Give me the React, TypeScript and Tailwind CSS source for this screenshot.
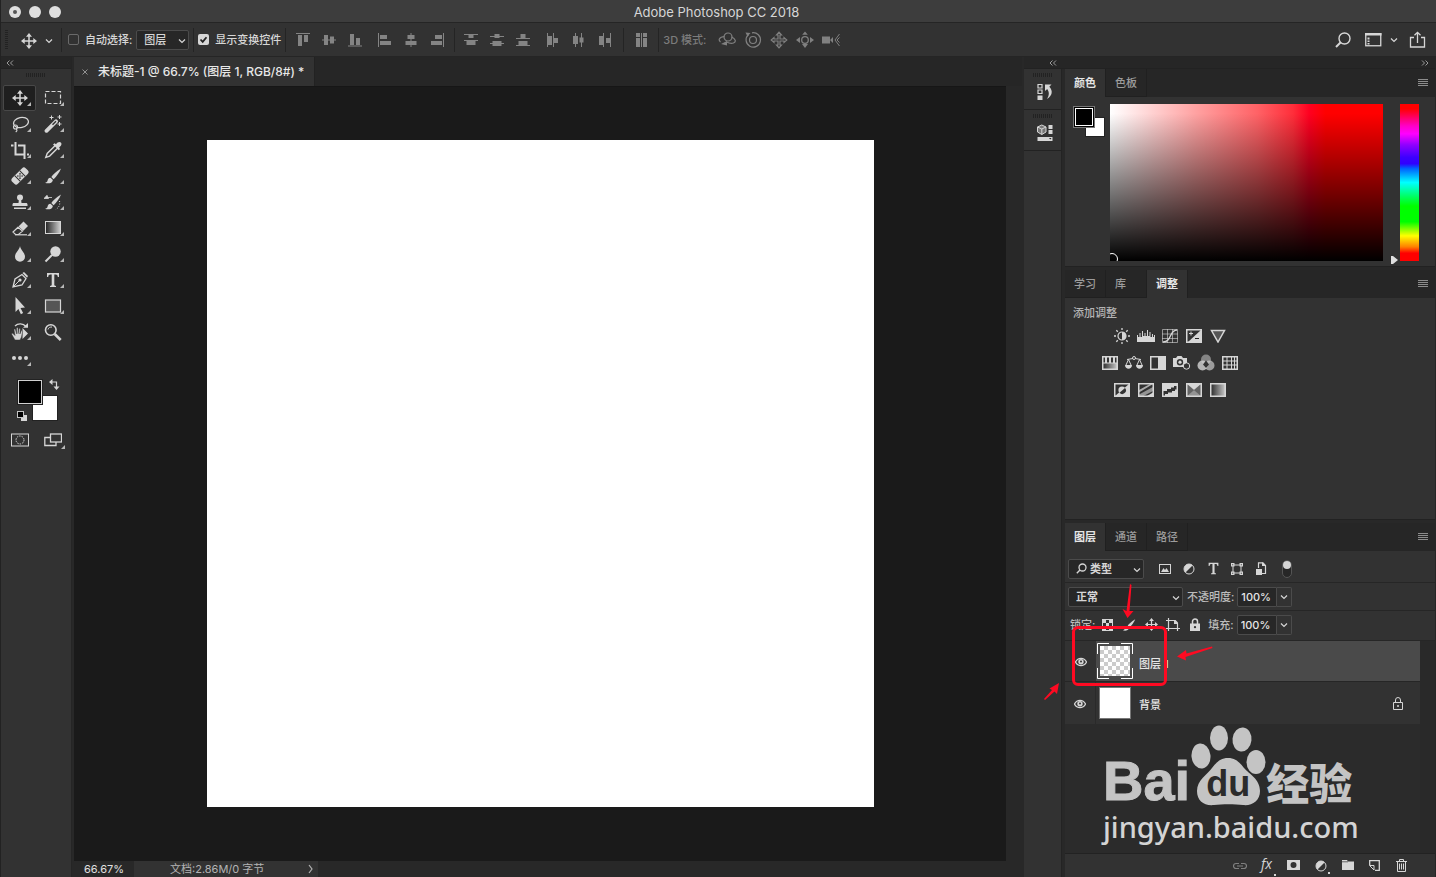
import React, { ReactNode } from "react";

type IconProps = { w?: number; h?: number; className?: string; children: ReactNode };

function Icon({ w = 18, h = 18, className = "", children }: IconProps) {
  return (
    <svg
      width={w}
      height={h}
      viewBox={`0 0 ${w} ${h}`}
      fill="currentColor"
      aria-hidden="true"
      className={`shrink-0 ${className}`}
    >
      {children}
    </svg>
  );
}

const line = { fill: "none", stroke: "currentColor" } as const;

const Chevron = ({ className = "" }: { className?: string }) => (
  <Icon w={8} h={6} className={className}>
    <path d="M1 1.500l3 3 3-3" {...line} strokeWidth="1.200" />
  </Icon>
);

const MoveIcon = ({ size = 16 }: { size?: number }) => (
  <svg width={size} height={size} viewBox="0 0 16 16" fill="currentColor" aria-hidden="true" className="shrink-0">
    <path d="M8 2v12M2 8h12" {...line} strokeWidth="1.500" />
    <path d="M8 0l3 3.700H5zM8 16l3-3.700H5zM0 8l3.700-3v6zM16 8l-3.700-3v6z" />
  </svg>
);

const DoubleChevron = ({ right = false }: { right?: boolean }) => (
  <Icon w={8} h={6}>
    {right ? (
      <path d="M1 .5L3.500 3 1 5.500M4.500 .5L7 3 4.500 5.500" {...line} strokeWidth="1" />
    ) : (
      <path d="M3.500 .5L1 3l2.500 2.500M7 .5L4.500 3 7 5.500" {...line} strokeWidth="1" />
    )}
  </Icon>
);

const GripH = () => (
  <svg width="20" height="4" aria-hidden="true">
    {Array.from({ length: 10 }, (_, i) => (
      <rect key={i} x={i * 2} y="0" width="1" height="4" fill="#222" />
    ))}
  </svg>
);

const MenuIcon = () => (
  <Icon w={10} h={8} className="text-[#8c8c8c]">
    <path d="M0 .5h10M0 2.500h10M0 4.500h10M0 6.500h10" {...line} />
  </Icon>
);

const BrushShape = () => (
  <>
    <path d="M17 1.500C12 4.500 9 7.500 7.300 10l2.300 2.200C12.500 9.500 15.500 5.500 17 1.500z" />
    <path d="M6.500 10.700c-2.200 0-2.700 1.500-3 3-.2 1-1 1.800-2.500 2 2.500 1.300 7.500.8 7.900-2.800z" />
  </>
);

const TShape = () => <path d="M3 2h12v4h-1.200c-.2-1.600-.8-2.400-2.300-2.400H10.300v10.200c0 .7.500 1 1.700 1.100V16H6v-1.100c1.200-.1 1.700-.4 1.700-1.100V3.600H6.500C5 3.600 4.400 4.400 4.200 6H3z" />;

const tools: { name: string; corner: boolean; icon: ReactNode }[] = [
  { name: "移动工具", corner: true, icon: <MoveIcon /> },
  {
    name: "矩形选框工具",
    corner: true,
    icon: <Icon><rect x="1.500" y="2.500" width="15" height="12" {...line} strokeWidth="1.200" strokeDasharray="4 2" /></Icon>,
  },
  {
    name: "套索工具",
    corner: true,
    icon: (
      <Icon>
        <ellipse cx="10" cy="7.500" rx="7.500" ry="5" transform="rotate(-12 10 7.500)" {...line} strokeWidth="1.300" />
        <circle cx="4.500" cy="12" r="2" {...line} strokeWidth="1.100" />
        <path d="M5 14c1.500.8 1.200 2-.3 3" {...line} strokeWidth="1.100" />
      </Icon>
    ),
  },
  {
    name: "魔棒工具",
    corner: true,
    icon: (
      <Icon>
        <path d="M2.500 15.800L12 6.300" {...line} strokeWidth="3.800" strokeLinecap="round" />
        <path d="M8.500 9.800L12 6.300" fill="none" stroke="#323232" strokeWidth="1.400" />
        <path d="M7.500 .5v4M5.500 2.500h4M15.500 7v4M13.500 9h4M15.500 0v4M13.500 2h4" {...line} />
      </Icon>
    ),
  },
  {
    name: "裁剪工具",
    corner: true,
    icon: <Icon><path d="M0 4.500h2.500M4.500 1v12.500H14M7 4.500h6.500V18M16 13.500h2" {...line} strokeWidth="2" /></Icon>,
  },
  {
    name: "吸管工具",
    corner: true,
    icon: (
      <Icon>
        <path d="M11.500 4.200L3.200 12.500l-1.400 3.900 3.800-1.300 8.400-8.400" {...line} strokeWidth="1.400" />
        <path d="M9 3.500l1.500-1.200 1.500 1C13.500 1 15.500.3 16.900 1.500c1.200 1.400.5 3.400-1.800 4.900l.9 1.500-1.200 1.400z" />
      </Icon>
    ),
  },
  {
    name: "污点修复画笔工具",
    corner: true,
    icon: (
      <Icon>
        <g transform="rotate(-45 9 9)">
          <rect x="-.5" y="5" width="19" height="8" rx="2.500" />
          <path d="M5.500 5v8M12.500 5v8" stroke="#323232" fill="none" />
          <g fill="#323232">
            <circle cx="7.500" cy="7.500" r=".8" /><circle cx="10.500" cy="7.500" r=".8" />
            <circle cx="7.500" cy="10.500" r=".8" /><circle cx="10.500" cy="10.500" r=".8" />
            <circle cx="9" cy="9" r=".8" />
          </g>
        </g>
      </Icon>
    ),
  },
  { name: "画笔工具", corner: true, icon: <Icon><BrushShape /></Icon> },
  {
    name: "仿制图章工具",
    corner: true,
    icon: (
      <Icon>
        <circle cx="9" cy="4.500" r="3" />
        <path d="M8 6h2l.5 4H15c1 0 1.500.6 1.500 1.500V13h-15v-1.500C1.500 10.600 2 10 3 10h4.500zM3 14.500h12V16H3z" />
      </Icon>
    ),
  },
  {
    name: "历史记录画笔工具",
    corner: true,
    icon: (
      <Icon>
        <BrushShape />
        <path d="M2 4.500h6M0 5.500l3-3.200 1.500 3.200z" stroke="currentColor" strokeWidth=".8" />
        <path d="M15.500 8c1 4-1 7-4 8.500" {...line} strokeDasharray="1 1.500" />
      </Icon>
    ),
  },
  {
    name: "橡皮擦工具",
    corner: true,
    icon: (
      <Icon>
        <path d="M7.500 7.500L12.500 2.500l4.500 4.500-4.700 4.700z" />
        <path d="M7 8.300L2 13l2.500 2.500h3l4-3.400z" {...line} strokeWidth="1.200" />
        <path d="M4 15.800h12" {...line} strokeWidth="1.200" />
      </Icon>
    ),
  },
  {
    name: "渐变工具",
    corner: true,
    icon: (
      <Icon>
        <defs><linearGradient id="g-tool"><stop stopColor="#222" /><stop offset="1" stopColor="#d0d0d0" /></linearGradient></defs>
        <rect x="1.500" y="2.500" width="15" height="12" fill="url(#g-tool)" stroke="currentColor" />
      </Icon>
    ),
  },
  {
    name: "模糊工具",
    corner: true,
    icon: <Icon><path d="M9 1c.4 4 5 6.500 5 10.700a5 5 0 0 1-10 0C4 7.500 8.600 5 9 1z" /></Icon>,
  },
  {
    name: "减淡工具",
    corner: true,
    icon: <Icon><circle cx="11.500" cy="6.500" r="5.200" /><path d="M8 10l-6.500 6.500" {...line} strokeWidth="2" /></Icon>,
  },
  {
    name: "钢笔工具",
    corner: true,
    icon: (
      <Icon>
        <path d="M2 16l2-8 7-4.500 4 4-4 6.500z" {...line} strokeWidth="1.300" />
        <path d="M2 16l6-6" {...line} />
        <circle cx="9" cy="9" r="1.600" />
        <path d="M11.500 2L13 1l4 4-1 1.700z" />
      </Icon>
    ),
  },
  { name: "横排文字工具", corner: true, icon: <Icon><TShape /></Icon> },
  {
    name: "路径选择工具",
    corner: true,
    icon: <Icon><path d="M4.500 0l9.500 10.500-4.500.5 2.600 5-2.200 1.200-2.500-5.100L4.500 15z" /></Icon>,
  },
  {
    name: "矩形工具",
    corner: true,
    icon: <Icon><rect x="1.500" y="3" width="15" height="12" fill="#555" stroke="currentColor" strokeWidth="1.200" /></Icon>,
  },
  {
    name: "旋转视图工具",
    corner: true,
    icon: (
      <Icon>
        <path d="M4 3C7 0 12 .2 15 3.500" {...line} strokeWidth="1.300" />
        <path d="M12 4.800h5V0zM11.500 5l5.500 5.500-5.500 5.500z" />
        <path
          d="M4 17L.8 11.500c-.5-1 .8-1.700 1.400-.8L4 12.500 3 6.800c-.1-1 1.200-1.200 1.500-.2l1 4.200V5.300c0-1 1.500-1 1.500 0v5.400l.9-4.800c.2-1 1.500-.8 1.400.2l-.4 4.900 1.300-2.900c.4-.9 1.600-.5 1.400.4L10.500 14 9 17z"
          stroke="#323232"
          strokeWidth=".5"
        />
      </Icon>
    ),
  },
  {
    name: "缩放工具",
    corner: false,
    icon: (
      <Icon>
        <circle cx="6.800" cy="7" r="5.300" {...line} strokeWidth="1.600" />
        <path d="M4 6.500C4.500 4.500 6 4 8 4" {...line} />
        <path d="M10.700 11l6 6" {...line} strokeWidth="2.600" />
      </Icon>
    ),
  },
  {
    name: "编辑工具栏",
    corner: true,
    icon: <Icon><circle cx="3" cy="9" r="2" /><circle cx="9" cy="9" r="2" /><circle cx="15" cy="9" r="2" /></Icon>,
  },
];

const Corner = () => (
  <svg width="4" height="4" className="absolute right-1 bottom-1 fill-[#b8b8b8]" aria-hidden="true">
    <path d="M4 0v4H0z" />
  </svg>
);

/* Alignment and distribution glyphs, on a 14 x 14 grid. */
const alignGroups: { name: string; d: string }[][] = [
  [
    { name: "顶对齐", d: "M0 0h14v1H0zM2 2h4v11H2zM8 2h4v7H8z" },
    { name: "垂直居中对齐", d: "M0 6.500h14v1H0zM2 2h4v10H2zM8 3.500h4v7H8z" },
    { name: "底对齐", d: "M0 12.500h14v1H0zM2 1h4v11H2zM8 5h4v7H8z" },
  ],
  [
    { name: "左对齐", d: "M0 0h1v14H0zM2 2h7v4H2zM2 8h11v4H2z" },
    { name: "水平居中对齐", d: "M6.500 0h1v14h-1zM3.500 2h7v4h-7zM1.500 8h11v4h-11z" },
    { name: "右对齐", d: "M13 0h1v14h-1zM5 2h7v4H5zM1 8h11v4H1z" },
  ],
  [
    { name: "按顶分布", d: "M0 1h14v1H0zM4.500 2h5v3h-5zM0 7h14v1H0zM2.500 8h9v4h-9z" },
    { name: "垂直居中分布", d: "M0 3h14v1H0zM4.500 1h5v4h-5zM0 10h14v1H0zM2.500 8h9v5h-9z" },
    { name: "按底分布", d: "M0 5h14v1H0zM4.500 1h5v4h-5zM0 12h14v1H0zM2.500 8h9v4h-9z" },
  ],
  [
    { name: "按左分布", d: "M1 0h1v14H1zM2 3h4v9H2zM7 0h1v14H7zM8 5h4v5H8z" },
    { name: "水平居中分布", d: "M3 0h1v14H3zM1 3h5v8H1zM9 0h1v14H9zM7.500 4.500h4v5h-4z" },
    { name: "按右分布", d: "M5 0h1v14H5zM1 3h4v9H1zM12 0h1v14h-1zM8 5h4v5H8z" },
  ],
];

const Sep = () => <div className="h-6 w-px shrink-0 bg-[#242424]" />;

const AlignGroup = ({ items }: { items: { name: string; d: string }[] }) => (
  <div className="flex gap-3">
    {items.map((a) => (
      <button key={a.name} type="button" aria-label={a.name} className="text-[#848484]">
        <Icon w={14} h={14}><path d={a.d} /></Icon>
      </button>
    ))}
  </div>
);

const threeD: { name: string; icon: ReactNode }[] = [
  {
    name: "环绕移动 3D 相机",
    icon: (
      <>
        <circle cx="10" cy="6" r="4" {...line} strokeWidth="1.200" />
        <path d="M6.500 5.500C1 6 0 9 2.500 11M13.500 6c4 1.500 5 5 2 6-2 .8-5 0-7-1" {...line} strokeWidth="1.200" />
        <path d="M3 13l6 1.500V10z" />
      </>
    ),
  },
  {
    name: "滚动 3D 相机",
    icon: (
      <>
        <circle cx="9" cy="9" r="3.500" {...line} strokeWidth="1.200" />
        <path d="M4.500 3.500A7.200 7.200 0 1 0 8 1.800" {...line} strokeWidth="1.200" />
        <path d="M1.500 1.500l5 .5-3 3.500z" />
      </>
    ),
  },
  {
    name: "平移 3D 相机",
    icon: <path d="M9 1.200L11.500 4H10v4h4V6.500L16.800 9 14 11.500V10h-4v4h1.500L9 16.800 6.500 14H8v-4H4v1.500L1.200 9 4 6.500V8h4V4H6.500z" {...line} strokeWidth="1.200" />,
  },
  {
    name: "滑动 3D 相机",
    icon: (
      <>
        <circle cx="9" cy="9" r="3.300" {...line} strokeWidth="1.300" />
        <path d="M9 .5l2.800 3.300H6.200zM9 17l3-4H6zM0 9l4-3v6zM18 9l-4-3v6z" />
      </>
    ),
  },
  {
    name: "变焦 3D 相机",
    icon: (
      <>
        <path d="M0 5.500h8v7H0zM8 9l3-3v6z" />
        <path d="M17.500 3L13 9l4.500 6M15 9l2.500-2.500M15 9l2.500 2.500" {...line} />
      </>
    ),
  },
];

function OptionsBar() {
  return (
    <div className="flex h-[34px] shrink-0 items-center border-b border-[#252525] bg-[#323232] pr-[10px]">
      <svg width="3" height="20" className="ml-1 shrink-0" aria-hidden="true">
        {Array.from({ length: 10 }, (_, i) => <rect key={i} y={i * 2} width="3" height="1" fill="#222" />)}
      </svg>
      <button type="button" aria-label="移动工具预设" className="ml-[13px] flex items-center gap-2 pt-0.5">
        <MoveIcon />
        <Chevron />
      </button>
      <div className="ml-2"><Sep /></div>
      <label className="ml-[6px] flex items-center gap-[6px] font-medium whitespace-nowrap">
        <input type="checkbox" className="size-[11px] appearance-none rounded-xs border border-[#6a6a6a]" />
        自动选择:
      </label>
      <div className="relative ml-1">
        <select aria-label="自动选择" className="h-5 w-[53px] appearance-none rounded-xs border border-[#4b4b4b] bg-[#272727] pl-[7px] text-[11px] leading-4 font-medium">
          <option>图层</option>
          <option>组</option>
        </select>
        <Chevron className="pointer-events-none absolute top-2 right-[3px]" />
      </div>
      <div className="ml-1"><Sep /></div>
      <label className="ml-1 flex items-center gap-[6px] font-medium whitespace-nowrap">
        <span className="relative flex">
          <input type="checkbox" defaultChecked className="size-[11px] appearance-none rounded-xs bg-[#d6d6d6]" />
          <svg width="11" height="11" className="pointer-events-none absolute inset-0" aria-hidden="true">
            <path d="M2.500 5.500l2.200 2.300 3.800-4.600" fill="none" stroke="#222" strokeWidth="1.800" />
          </svg>
        </span>
        显示变换控件
      </label>
      <div className="ml-1"><Sep /></div>
      <div className="ml-[10px] flex items-center gap-4">
        <AlignGroup items={alignGroups[0]} />
        <AlignGroup items={alignGroups[1]} />
      </div>
      <div className="ml-[10px]"><Sep /></div>
      <div className="ml-[9px] flex items-center gap-4">
        <AlignGroup items={alignGroups[2]} />
        <AlignGroup items={alignGroups[3]} />
      </div>
      <div className="ml-[11px]"><Sep /></div>
      <button type="button" aria-label="自动对齐图层" className="ml-[11px] text-[#848484]">
        <Icon w={13} h={14}><path d="M1 0h4v4H1zM1 5h4v9H1zM6 0h1v14H6zM8 0h4v4H8zM8 5h4v9H8z" /></Icon>
      </button>
      <div className="ml-[10px]"><Sep /></div>
      <span className="ml-1 font-medium whitespace-nowrap text-[#7c7c7c]">3D 模式:</span>
      <div className="ml-3 flex gap-2">
        {threeD.map((t) => (
          <button key={t.name} type="button" aria-label={t.name} className="text-[#808080]"><Icon>{t.icon}</Icon></button>
        ))}
      </div>
      <div className="ml-auto flex items-center">
        <button type="button" aria-label="搜索">
          <Icon><circle cx="10.500" cy="7.500" r="5.500" {...line} strokeWidth="1.400" /><path d="M6.500 11.500l-4.500 4.500" {...line} strokeWidth="2" /></Icon>
        </button>
        <button type="button" aria-label="选择工作区" className="ml-[13px] flex items-center gap-2">
          <Icon w={17} h={14}>
            <rect x=".75" y=".75" width="15" height="12" {...line} strokeWidth="1.300" />
            <path d="M0 0h16.500v2.500H0zM2.500 4.500h2v2h-2zM2.500 7.500h2v1.500h-2zM2.500 10h2v1.500h-2z" />
          </Icon>
          <Chevron />
        </button>
        <button type="button" aria-label="共享图像" className="ml-[11px]">
          <Icon w={17} h={18}>
            <path d="M5 6.500H1.500V16h14V6.500H12M8.500 12V1.500M5.500 4.300l3-3 3 3" {...line} strokeWidth="1.300" />
          </Icon>
        </button>
      </div>
    </div>
  );
}

function Toolbar() {
  return (
    <aside className="mr-0.5 flex w-[71px] shrink-0 flex-col border-r border-[#252525] bg-[#323232]">
      <div className="flex h-3 shrink-0 items-center border-b border-[#222] bg-[#262626] pl-[5px] text-[#9a9a9a]"><DoubleChevron /></div>
      <div className="flex justify-center pt-1 pb-2"><GripH /></div>
      <div className="grid grid-cols-[33px_33px] pl-0.5">
        {tools.map((t, i) => (
          <button
            key={t.name}
            type="button"
            aria-label={t.name}
            className={`relative flex h-[26px] items-center justify-center rounded-xs border ${i === 0 ? "border-[#484848] bg-[#1f1f1f]" : "border-transparent"}`}
          >
            {t.icon}
            {t.corner && <Corner />}
          </button>
        ))}
      </div>
      <div className="mt-2 ml-4 grid h-[44px] w-[44px] grid-cols-[26px_18px] grid-rows-[26px_18px]">
        <div className="relative">
          <button type="button" aria-label="背景色" className="absolute top-4 left-[15px] size-[26px] border border-[#222] bg-white" />
          <button type="button" aria-label="前景色" className="absolute inset-0 border border-[#222] bg-black ring-1 ring-[#d0d0d0] ring-inset" />
        </div>
        <button type="button" aria-label="切换前景色和背景色" className="flex items-start pl-1.5">
          <Icon w={11} h={12}><path d="M3 3h4.500v5" {...line} strokeWidth="1.200" /><path d="M0 3l3.500-3v6zM7.500 11l-3-3.500h6z" /></Icon>
        </button>
        <button type="button" aria-label="默认前景色和背景色" className="flex items-start pt-1.5">
          <Icon w={10} h={11}><rect x="4" y="4" width="6" height="6" /><rect x=".5" y=".5" width="6" height="6" fill="#000" stroke="#c4c4c4" /></Icon>
        </button>
      </div>
      <div className="mt-1 grid grid-cols-[33px_33px] pl-0.5">
        <button type="button" aria-label="以快速蒙版模式编辑" className="flex h-[26px] items-center justify-center">
          <Icon><rect x=".5" y="3" width="17" height="12" {...line} /><circle cx="9" cy="9" r="4" {...line} strokeDasharray="1.500 1" /></Icon>
        </button>
        <button type="button" aria-label="更改屏幕模式" className="relative flex h-[26px] items-center justify-center">
          <Icon><rect x="6.500" y="3" width="11" height="8" {...line} strokeWidth="1.300" /><path d="M6 6.500H.8v8H12V11" {...line} strokeWidth="1.300" /></Icon>
          <Corner />
        </button>
      </div>
    </aside>
  );
}

function DocumentArea() {
  return (
    <main className="flex min-w-0 flex-1 flex-col">
      <div className="flex h-[29px] shrink-0 bg-[#262626]">
        <div className="flex items-center gap-[10px] border-r border-[#222] bg-[#323232] pr-[10px] pl-2 text-[#e8e8e8]">
          <button type="button" aria-label="关闭文档" className="text-[#929292]">
            <Icon w={6} h={6}><path d="M.5 .5l5 5M5.500 .5l-5 5" {...line} /></Icon>
          </button>
          <span className="text-[12px] font-medium whitespace-nowrap">未标题-1 @ 66.7% (图层 1, RGB/8#) *</span>
        </div>
      </div>
      <div className="flex min-h-[700px] flex-1">
        <div className="flex flex-1 items-center justify-center border-t border-[#161616] bg-[#1a1a1a] pb-0.5">
          <div className="size-[667px] bg-white" />
        </div>
        <div className="w-4 shrink-0 bg-[#282828]" />
      </div>
      <div className="flex h-4 shrink-0 items-center bg-[#282828] text-[#e0e0e0]">
        <span className="w-[60px] pl-[10px]">66.67%</span>
        <div className="flex h-full w-[184px] items-center justify-between bg-[#323232] pr-1 pl-9 text-[#b4b4b4]">
          <span className="whitespace-nowrap">文档:2.86M/0 字节</span>
          <button type="button" aria-label="状态栏选项"><Icon w={6} h={10}><path d="M1 1l3 4-3 4" {...line} strokeWidth="1.200" /></Icon></button>
        </div>
      </div>
    </main>
  );
}

function IconDock() {
  return (
    <div className="mr-[3px] flex w-[38px] shrink-0 flex-col border-r border-[#232323] bg-[#323232]">
      <div className="flex h-[41px] flex-col items-center border-b border-[#222] pt-1">
        <GripH />
        <button type="button" aria-label="历史记录" className="mt-1.5 ml-1">
          <Icon><path d="M2 1.500h4v3.500H2zM2 7h4v3.500H2z" {...line} strokeWidth="1.200" /><path d="M1.500 12.500h5v4.500h-5z" /><path d="M9 1.500h6.500l-2.200 2.200c4 4 3 9-2.300 12.300 2.500-4 2.300-7 .2-10L9 8z" /></Icon>
        </button>
      </div>
      <div className="flex h-[41px] flex-col items-center border-b border-[#222] pt-1">
        <GripH />
        <button type="button" aria-label="属性" className="mt-1.5 ml-1">
          <Icon w={16} h={18}>
            <path d="M4.800 1l4.200 2v5L4.800 10.500.5 8V3z" fill="#777" stroke="currentColor" /><path d="M.5 3l4.300 2L9 3M4.800 5v5.500" {...line} />
            <path d="M11.500 1h4v4h-4zM11.500 6h4v4h-4zM.5 13h15v4H.5z" /><path d="M12 14h2.500l-1.200 1.500z" fill="#222" />
          </Icon>
        </button>
      </div>
    </div>
  );
}

function Tabs({ items, active }: { items: string[]; active: string }) {
  return (
    <div className="flex h-7 shrink-0 items-stretch bg-[#262626] pr-[7px]">
      <div role="tablist" className="flex">
        {items.map((t) => (
          <button
            key={t}
            type="button"
            role="tab"
            aria-selected={t === active}
            className={`w-[41px] border-r border-[#202020] pl-[9px] text-left ${t === active ? "bg-[#323232] font-bold text-[#e6e6e6]" : "border-b font-medium text-[#9c9c9c]"}`}
          >
            {t}
          </button>
        ))}
      </div>
      <button type="button" aria-label="面板菜单" className="ml-auto"><MenuIcon /></button>
    </div>
  );
}

function ColorPanel() {
  return (
    <section className="mb-[3px] shrink-0 border-b border-[#222] bg-[#323232]">
      <Tabs items={["颜色", "色板"]} active="颜色" />
      <div className="flex pt-[7px] pb-[5px] pl-2">
        <div className="relative mt-0.5 h-8 w-8 shrink-0">
          <button type="button" aria-label="背景色" className="absolute right-0 bottom-px size-5 border border-[#222] bg-white" />
          <button type="button" aria-label="前景色" className="absolute top-0 left-0 size-[22px] border border-[#777] bg-black p-px">
            <span className="block size-full border border-white bg-black" />
          </button>
        </div>
        <div className="relative ml-[5px] h-[157px] flex-1 overflow-hidden bg-[linear-gradient(to_top,#000,transparent_94%),linear-gradient(to_right,#fff,#ffa0a0_32%,#ff6266_54%,#ff2e3a_67%,#ff0020_73%,#f00_79%)]">
          <span className="absolute -bottom-1 -left-1 size-3 rounded-full border border-white" />
        </div>
        <div className="relative mr-4 ml-[17px] h-[157px] w-[19px] bg-[linear-gradient(#f00_3%,#ff00c8_14%,#f0f_19%,#9000ff_26%,#3c00ff_34%,#3000ff_38%,#0060ff_41%,#0ff_50%,#00ff60_59%,#0f0_65%,#0f0_75%,#ff0_84%,#ff8000_91%,#f00_95%)]">
          <svg width="8" height="8" className="absolute -bottom-[3px] -left-[10px]" aria-hidden="true"><path d="M1 0h2l5 4-5 4H1z" fill="#e0e0e0" /></svg>
        </div>
      </div>
    </section>
  );
}

const Frame = ({ children }: { children?: ReactNode }) => (
  <Icon w={16} h={14}>{children}<rect x=".75" y=".75" width="14.500" height="12.500" {...line} strokeWidth="1.500" /></Icon>
);

const adjustRows: { name: string; icon: ReactNode }[][] = [
  [
    { name: "亮度/对比度", icon: <Icon w={16} h={16}><circle cx="8" cy="8" r="4" {...line} strokeWidth="1.200" /><path d="M8 4a4 4 0 0 1 0 8z" /><path d="M8 0v2M8 14v2M0 8h2M14 8h2M2.300 2.300l1.500 1.500M12.200 12.200l1.500 1.500M2.300 13.700l1.500-1.500M12.200 3.800l1.500-1.500" {...line} strokeWidth="1.300" /></Icon> },
    { name: "色阶", icon: <Icon w={18} h={14}><path d="M0 13V6h1v2h1.500V4h1v4H5V2h1v5h1.500V4h1v3H10V1h1v6h1.500V3h1v5H15V5h1v3h1V6h1v7z" /></Icon> },
    { name: "曲线", icon: <Icon w={16} h={14}><path d="M.5 .5h15v13H.5zM5.500 0v14M10.500 0v14M0 5h16M0 9.500h16" {...line} opacity=".6" /><path d="M1 13c9 0 6-12 14-12" {...line} strokeWidth="1.300" /></Icon> },
    { name: "曝光度", icon: <Frame><path d="M15 1v12H2z" /><path d="M3 4.500h4M5 2.500v4" {...line} /><path d="M9 9.500h4" stroke="#222" /></Frame> },
    { name: "自然饱和度", icon: <Icon w={16} h={14}><path d="M1.500 1.500h13L8 13z" fill="#555" stroke="currentColor" strokeWidth="1.500" /></Icon> },
  ],
  [
    { name: "色相/饱和度", icon: <Frame><path d="M0 7h16v7H0z" fill="url(#g-adj)" /><path d="M4 1v6M8 1v6M12 1v6" {...line} strokeWidth="2" /><path d="M1 7h14" {...line} /></Frame> },
    { name: "色彩平衡", icon: <Icon w={18} h={14}><circle cx="9" cy="2" r="1.500" {...line} /><path d="M2 3.500l6-1M10 2.500l6 1M3.500 3.500L1 9M3.500 3.500L6 9M14.500 3.500L12 9M14.500 3.500L17 9" {...line} /><path d="M0 9h7c0 5-7 5-7 0zM11 9h7c0 5-7 5-7 0z" /></Icon> },
    { name: "黑白", icon: <Frame><path d="M8 1h7v12H8z" /></Frame> },
    { name: "照片滤镜", icon: <Icon w={18} h={15}><path fillRule="evenodd" d="M0 3h3l1.500-2h4L10 3h4v5a4 4 0 0 0-4 4H0zM7 4a3.200 3.200 0 1 0 0 6.400A3.200 3.200 0 0 0 7 4z" /><circle cx="7" cy="7.200" r="1.600" /><circle cx="13.500" cy="11" r="3.200" {...line} /></Icon> },
    { name: "通道混合器", icon: <Icon w={18} h={17}><circle cx="9" cy="5.500" r="5" opacity=".5" /><circle cx="5.500" cy="11.500" r="5" opacity=".8" /><circle cx="12.500" cy="11.500" r="5" opacity=".65" /><path d="M9 6.500l3 4-3 3.500-3-3.500z" fill="#333" /></Icon> },
    { name: "颜色查找", icon: <Frame><path d="M1 5h14M1 9h14M5 1v12M9.500 1v12M12.500 1v12" {...line} /></Frame> },
  ],
  [
    { name: "反相", icon: <Frame><path d="M1 13L15 1v12z" /><circle cx="8" cy="7" r="3.600" /><path d="M5.500 9.700A3.600 3.600 0 0 0 11 5z" fill="#333" /></Frame> },
    { name: "色调分离", icon: <Frame><path d="M1 7L12 1h3L1 9.500z" opacity=".75" /><path d="M1 13v-1.500L15 4v4L5.500 13z" opacity=".6" /><path d="M9 13l6-3.500V13z" /></Frame> },
    { name: "阈值", icon: <Frame><path d="M1 1h14v2h-3v1.500H9V6H5v2H1z" /><path d="M3 13v-2h3V9.500h4V8h3V6.500h2V13z" /></Frame> },
    { name: "可选颜色", icon: <Frame><path d="M1 1h14L8 7z" /><path d="M1 13h14L8 7z" opacity=".6" /><path d="M1 1l7 6-7 6zM15 1L8 7l7 6z" opacity=".3" /></Frame> },
    { name: "渐变映射", icon: <Frame><path d="M0 0h16v14H0z" fill="url(#g-adj)" /></Frame> },
  ],
];

function AdjustPanel() {
  return (
    <section className="mb-[3px] flex h-[250px] shrink-0 flex-col border-b border-[#222] bg-[#323232]">
      <svg width="0" height="0" className="absolute" aria-hidden="true">
        <defs><linearGradient id="g-adj"><stop stopColor="#222" /><stop offset="1" stopColor="#d0d0d0" /></linearGradient></defs>
      </svg>
      <Tabs items={["学习", "库", "调整"]} active="调整" />
      <h2 className="px-2 pt-[7px] leading-4 font-medium text-[#b4b4b4]">添加调整</h2>
      <div className="flex w-[210px] flex-col items-center pt-px">
        {adjustRows.map((row, i) => (
          <div key={i} className="flex h-[27px] items-center">
            {row.map((a) => (
              <button key={a.name} type="button" aria-label={a.name} className="flex w-6 justify-center">{a.icon}</button>
            ))}
          </div>
        ))}
      </div>
    </section>
  );
}

const filterIcons: { name: string; icon: ReactNode }[] = [
  { name: "像素图层滤镜", icon: <Icon w={12} h={12}><rect x=".5" y="1.500" width="11" height="9" {...line} /><path d="M2 9l2.500-4L6 7l1.500-2L10 9z" /></Icon> },
  { name: "调整图层滤镜", icon: <Icon w={12} h={12}><circle cx="6" cy="6" r="5" {...line} /><path d="M2.500 2.500A5 5 0 0 1 9.500 2.500l-7 7A5 5 0 0 1 2.500 2.500z" /></Icon> },
  { name: "文字图层滤镜", icon: <svg width="13" height="13" viewBox="2 1 14 16" fill="currentColor"><TShape /></svg> },
  { name: "形状图层滤镜", icon: <Icon w={12} h={12}><path d="M2 2h8v8H2z" {...line} /><path d="M0 0h3.500v3.500H0zM8.500 0H12v3.500H8.500zM0 8.500h3.500V12H0zM8.500 8.500H12V12H8.500z" /><path d="M1.200 1.200h1v1h-1zM9.800 1.200h1v1h-1zM1.200 9.800h1v1h-1zM9.800 9.800h1v1h-1z" fill="#333" /></Icon> },
  { name: "智能对象滤镜", icon: <Icon w={12} h={13}><path d="M3.500 6V.8H8L10.500 3.500v8H7" {...line} strokeWidth="1.200" /><path d="M1 7h6v6H1zM7 0v4h4z" /></Icon> },
];

const PercentBox = ({ label }: { label: string }) => (
  <div className="flex items-center">
    <label className="flex items-center gap-[3px] font-medium whitespace-nowrap text-[#bcbcbc]">
      {label}
      <input type="text" defaultValue="100%" className="h-5 w-10 rounded-l-xs border border-[#4b4b4b] bg-[#272727] px-[3px] text-[11px] text-[#e6e6e6]" />
    </label>
    <button type="button" aria-label={`${label}滑块`} className="flex h-5 w-[15px] items-center justify-center rounded-r-xs border border-l-0 border-[#4b4b4b]"><Chevron /></button>
  </div>
);

const EyeIcon = () => (
  <Icon w={12} h={10}>
    <path d="M.5 5C3 .2 9 .2 11.500 5 9 9.800 3 9.800 .5 5z" {...line} strokeWidth="1.300" />
    <circle cx="6" cy="4.700" r="2.700" /><circle cx="6" cy="4.500" r="1" fill="#333" />
  </Icon>
);

const LockIcon = () => (
  <Icon w={10} h={13}><path d="M2.500 6V3.500a2.500 2.500 0 0 1 5 0V6" {...line} strokeWidth="1.500" /><path fillRule="evenodd" d="M0 5.500h10V13H0zM5 8a1 1 0 0 0 0 2.300A1 1 0 0 0 5 8z" /></Icon>
);

function Watermark() {
  return (
    <div className="flex flex-col pt-px pl-[38px] text-[#c4c4c4]">
      <div className="flex h-[82px] items-end">
        <span className="h-[58px] text-[56px] leading-[64px] font-bold [font-family:'Liberation_Sans',sans-serif] [-webkit-text-stroke:1px_#c4c4c4]">Bai</span>
        <div className="relative h-[82px] w-[76px] shrink-0">
          <svg width="76" height="82" viewBox="0 0 76 82" fill="currentColor" aria-hidden="true">
            <ellipse cx="11" cy="31" rx="9.500" ry="12.500" transform="rotate(-6 11 31)" />
            <ellipse cx="29" cy="13" rx="9" ry="12.500" />
            <ellipse cx="52" cy="14.500" rx="9.500" ry="12" transform="rotate(6 52 14.500)" />
            <ellipse cx="66" cy="37" rx="9.500" ry="12" />
            <path d="M38 33c8 0 12 5 16 10 5 6 16 11 16 23 0 10-8 15-17 14-8-1-21-1-29 0C14 81 7 76 7 66c0-11 10-16 15-23 4-5 8-10 16-10z" />
          </svg>
          <span className="absolute inset-x-0 bottom-[5px] text-center text-[36px] leading-9 font-bold text-[#2b2b2b] [font-family:'Liberation_Sans',sans-serif]">du</span>
        </div>
        <span className="mb-1 text-[43px] leading-[44px] font-black whitespace-nowrap [font-family:'Noto_Sans_CJK_SC',sans-serif]">经验</span>
      </div>
      <span className="text-[29px] leading-10 font-medium whitespace-nowrap text-[#d4d4d4] [font-family:'Noto_Sans',sans-serif]">jingyan.baidu.com</span>
    </div>
  );
}

function LayersPanel() {
  return (
    <section className="relative flex flex-1 flex-col bg-[#323232]">
      <Tabs items={["图层", "通道", "路径"]} active="图层" />
      <div className="flex h-8 shrink-0 items-center border-b border-[#262626] pt-1 pl-[3px]">
        <div className="relative">
          <Icon w={11} h={11} className="pointer-events-none absolute top-1 left-2"><circle cx="6.500" cy="4.500" r="3.500" {...line} strokeWidth="1.300" /><path d="M4 7L.8 10.200" {...line} strokeWidth="1.400" /></Icon>
          <select aria-label="滤镜类型" className="h-5 w-[76px] appearance-none rounded-xs border border-[#4b4b4b] bg-[#272727] pl-[21px] text-[11px] leading-4 font-bold">
            <option>类型</option>
            <option>名称</option>
          </select>
          <Chevron className="pointer-events-none absolute top-2 right-[3px]" />
        </div>
        <div className="ml-[9px] flex">
          {filterIcons.map((f) => (
            <button key={f.name} type="button" aria-label={f.name} className="flex w-6 items-center justify-center">{f.icon}</button>
          ))}
        </div>
        <button type="button" aria-label="打开或关闭图层滤镜" className="ml-[9px] h-[18px] w-[10px] rounded-full border border-[#555] bg-[#272727]"><span className="-mt-2 block size-2 rounded-full bg-[#d6d6d6]" /></button>
      </div>
      <div className="flex h-7 shrink-0 items-center border-b border-[#262626] pl-[3px]">
        <div className="relative mr-1">
          <select aria-label="混合模式" className="h-5 w-[115px] appearance-none rounded-xs border border-[#4b4b4b] bg-[#272727] pl-[7px] text-[11px] leading-4 font-bold">
            <option>正常</option>
            <option>正片叠底</option>
          </select>
          <Chevron className="pointer-events-none absolute top-2 right-[3px]" />
        </div>
        <PercentBox label="不透明度:" />
      </div>
      <div className="flex h-[30px] shrink-0 items-center border-b border-[#262626] pb-0.5 pl-[5px]">
        <span className="font-medium whitespace-nowrap text-[#bcbcbc]">锁定:</span>
        <div className="mr-0.5 ml-px flex">
          <button type="button" aria-label="锁定透明像素" className="flex w-[22px] items-center justify-center"><Icon w={11} h={12}><rect x=".5" y=".5" width="10" height="11" {...line} /><path d="M1 1h3v3H1zM7 1h3v3H7zM4 4h3v3H4zM1 7h3v4H1zM7 7h3v4H7z" /></Icon></button>
          <button type="button" aria-label="锁定图像像素" className="flex w-[22px] items-center justify-center"><svg width="14" height="14" viewBox="0 0 18 18" fill="currentColor"><BrushShape /></svg></button>
          <button type="button" aria-label="锁定位置" className="flex w-[22px] items-center justify-center"><MoveIcon size={13} /></button>
          <button type="button" aria-label="防止在画板内外自动嵌套" className="flex w-[22px] items-center justify-center"><Icon w={14} h={13}><path d="M2.500 0v2M0 2.500h2M11.500 11v2M12 10.500h2M2.500 11v2M0 10.500h2M2.500 2.500v8h9V5.500l-3-3z" {...line} strokeWidth="1.200" /><path d="M8 2h1.500L12 4.500V6H8z" /></Icon></button>
          <button type="button" aria-label="锁定全部" className="flex w-[22px] items-center justify-center"><LockIcon /></button>
        </div>
        <PercentBox label="填充:" />
      </div>
      <div className="flex min-h-[212px] flex-1">
        <div className="flex min-w-0 flex-1 flex-col bg-[#2b2b2b]">
          <div className="flex h-[41px] shrink-0 items-stretch border-b border-[#262626] bg-[#4a4a4a]">
            <button type="button" aria-label="图层 1 可见性" className="flex w-[31px] items-center justify-center bg-[#323232] pt-0.5"><EyeIcon /></button>
            <div className="relative ml-0.5 flex w-[34px] items-center justify-center">
              <svg width="36" height="36" className="absolute" aria-hidden="true"><path d="M.5 11V.5H12M24 .5h11.500V11M35.500 25v10.500H24M12 35.500H.5V25" fill="none" stroke="#fff" /></svg>
              <div className="size-[30px] bg-[repeating-conic-gradient(#ccc_0_25%,#fff_0_50%)] bg-size-[8px_8px]" />
            </div>
            <span className="ml-[7px] self-center pt-1.5 font-medium text-[#e6e6e6]">图层 1</span>
          </div>
          <div className="flex h-[42px] shrink-0 items-stretch bg-[#323232]">
            <button type="button" aria-label="背景可见性" className="flex w-[31px] items-center justify-center border-r border-[#2a2a2a] pt-0.5"><EyeIcon /></button>
            <div className="ml-0.5 flex w-[34px] items-center justify-center"><div className="size-8 border border-[#777] bg-white" /></div>
            <span className="ml-[7px] self-center pt-1 font-medium text-[#e6e6e6]">背景</span>
            <span className="mr-[17px] ml-auto self-center"><Icon w={10} h={13}><path d="M2.500 5V3a2.500 2.500 0 0 1 5 0v2M.5 5.500h9v7h-9z" {...line} /><circle cx="5" cy="9" r="1" /></Icon></span>
          </div>
          <Watermark />
        </div>
        <div className="w-[15px] shrink-0 bg-[#292929]" />
      </div>
      <div className="flex h-6 shrink-0 items-center justify-end border-t border-[#222] pr-5">
        <button type="button" aria-label="链接图层" className="flex w-[27px] justify-center text-[#808080]"><Icon w={14} h={8}><path d="M6 1.500H3a2.500 2.500 0 0 0 0 5h3M8 1.500h3a2.500 2.500 0 0 1 0 5H8M4 4h6" {...line} strokeWidth="1.200" /></Icon></button>
        <button type="button" aria-label="添加图层样式" className="relative flex w-[27px] justify-center pb-1 text-[14px] leading-4 italic [font-family:'Open_Sans',sans-serif]">fx<span className="absolute right-1 bottom-0 size-0.5 bg-[#d6d6d6]" /></button>
        <button type="button" aria-label="添加图层蒙版" className="flex w-[27px] justify-center"><Icon w={13} h={12}><path fillRule="evenodd" d="M0 0h13v10H0zM6.500 2a3 3 0 1 0 0 6 3 3 0 0 0 0-6z" /></Icon></button>
        <button type="button" aria-label="创建新的填充或调整图层" className="relative flex w-[27px] justify-center"><Icon w={12} h={12}><circle cx="6" cy="6" r="5" {...line} /><path d="M2.500 2.500A5 5 0 0 1 9.500 2.500l-7 7A5 5 0 0 1 2.500 2.500z" /></Icon><span className="absolute right-1 -bottom-0.5 size-0.5 bg-[#d6d6d6]" /></button>
        <button type="button" aria-label="创建新组" className="flex w-[27px] justify-center"><Icon w={12} h={12}><path d="M0 0h5l1 1.500h6V10H0z" /><path d="M0 1.800h6" stroke="#323232" strokeWidth=".7" /></Icon></button>
        <button type="button" aria-label="创建新图层" className="flex w-[27px] justify-center"><Icon w={11} h={11}><path d="M.7 5V.7h9.600v9.600H6" {...line} strokeWidth="1.300" /><path d="M.5 5.500h4.500v4.500z" {...line} /></Icon></button>
        <button type="button" aria-label="删除图层" className="flex w-[27px] justify-center"><Icon w={11} h={13}><path d="M0 2.500h11M3.500 2.500v-2h4v2M1.500 3v9.500h8V3M3.500 4.500v6M5.500 4.500v6M7.500 4.500v6" {...line} /></Icon></button>
      </div>
      <div className="pointer-events-none absolute top-[103px] left-[7px] h-[60px] w-[95px] rounded-md border-3 border-[#ff0a22]" />
      <svg width="180" height="130" className="pointer-events-none absolute top-[57px] -left-[25px]" fill="#ff0a22" aria-hidden="true">
        <path d="M90 4l1.500 1-2 26h4L87.500 38 82.500 29l4 2z" />
        <path d="M172 66.500l.5 1.500-27 9 .5 3.500-9-4 9-6.500.5 3.500z" />
        <path d="M4 119l8-9-2.500-1.500L19 103l-2 11-2.500-2.500L5 120z" />
      </svg>
    </section>
  );
}

export default function App() {
  return (
    <div className="flex min-h-screen flex-col border-l border-[#222] bg-[#282828] text-[11px] leading-4 text-[#d6d6d6] [font-family:Inter,'Noto_Sans_CJK_SC',sans-serif]">
      <header className="flex h-[23px] shrink-0 items-center border-b border-[#252525] bg-[#3d3d3d] pr-3 pl-2">
        <div className="flex w-24 gap-2 pt-0.5">
          <button type="button" aria-label="关闭窗口" className="flex size-3 items-center justify-center rounded-full bg-[#dedede]"><span className="size-1 rounded-full bg-[#555]" /></button>
          <button type="button" aria-label="最小化窗口" className="size-3 rounded-full bg-[#dedede]" />
          <button type="button" aria-label="缩放窗口" className="size-3 rounded-full bg-[#dedede]" />
        </div>
        <h1 className="flex-1 pt-0.5 text-center text-[13px]">Adobe Photoshop CC 2018</h1>
        <div className="w-24" />
      </header>
      <OptionsBar />
      <div className="flex flex-1">
        <Toolbar />
        <DocumentArea />
        <div className="ml-0.5 flex w-[412px] shrink-0 flex-col border-r border-[#262626]">
          <div className="flex h-3 shrink-0 items-center border-b border-[#222] bg-[#262626] text-[#9a9a9a]">
            <span className="ml-[25px]"><DoubleChevron /></span>
            <span className="mr-[6px] ml-auto"><DoubleChevron right /></span>
          </div>
          <div className="flex flex-1">
            <IconDock />
            <div className="flex min-w-0 flex-1 flex-col">
              <ColorPanel />
              <AdjustPanel />
              <LayersPanel />
            </div>
          </div>
        </div>
      </div>
    </div>
  );
}
